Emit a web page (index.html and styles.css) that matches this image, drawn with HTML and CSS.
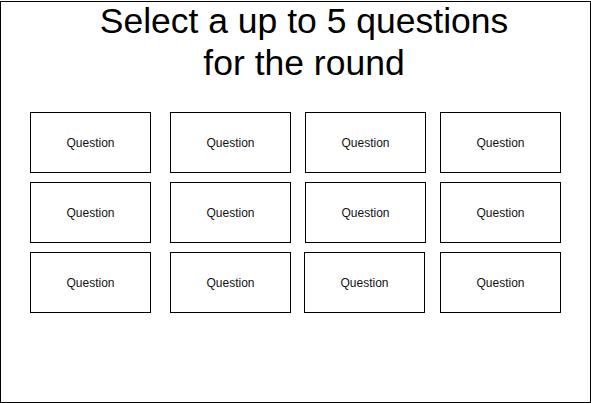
FILE: index.html
```html
<!DOCTYPE html>
<html>
<head>
<meta charset="utf-8">
<link rel="stylesheet" href="styles.css">
</head>
<body>
<div class="frame">
  <h1 class="title">Select a up to 5 questions<br>for the round</h1>
  <div class="grid">
    <div class="card">Question</div>
    <div class="card">Question</div>
    <div class="card">Question</div>
    <div class="card">Question</div>
    <div class="card">Question</div>
    <div class="card">Question</div>
    <div class="card">Question</div>
    <div class="card">Question</div>
    <div class="card">Question</div>
    <div class="card">Question</div>
    <div class="card card-shift">Question</div>
    <div class="card">Question</div>
  </div>
</div>
</body>
</html>
```
FILE: styles.css
```css
html, body {
  margin: 0;
  padding: 0;
  background: #fff;
}
body {
  font-family: "Liberation Sans", Arial, Helvetica, sans-serif;
  color: #000;
}
.frame {
  box-sizing: border-box;
  margin-top: 1px;
  width: 591px;
  height: 402px;
  border: 1px solid #000;
}
.title {
  margin: -2px 0 0 0;
  padding-left: 17px;
  font-size: 35.5px;
  font-weight: normal;
  line-height: 42px;
  text-align: center;
}
.grid {
  margin-top: 28px;
  padding-left: 29px;
  display: grid;
  grid-template-columns: 140px 135px 135px 121px;
  grid-auto-rows: 61px;
  row-gap: 9px;
}
.card {
  box-sizing: border-box;
  width: 121px;
  height: 61px;
  border: 1px solid #000;
  display: flex;
  align-items: center;
  justify-content: center;
  font-size: 12px;
  color: #111;
}
.card-shift {
  margin-left: -1px;
}
```
